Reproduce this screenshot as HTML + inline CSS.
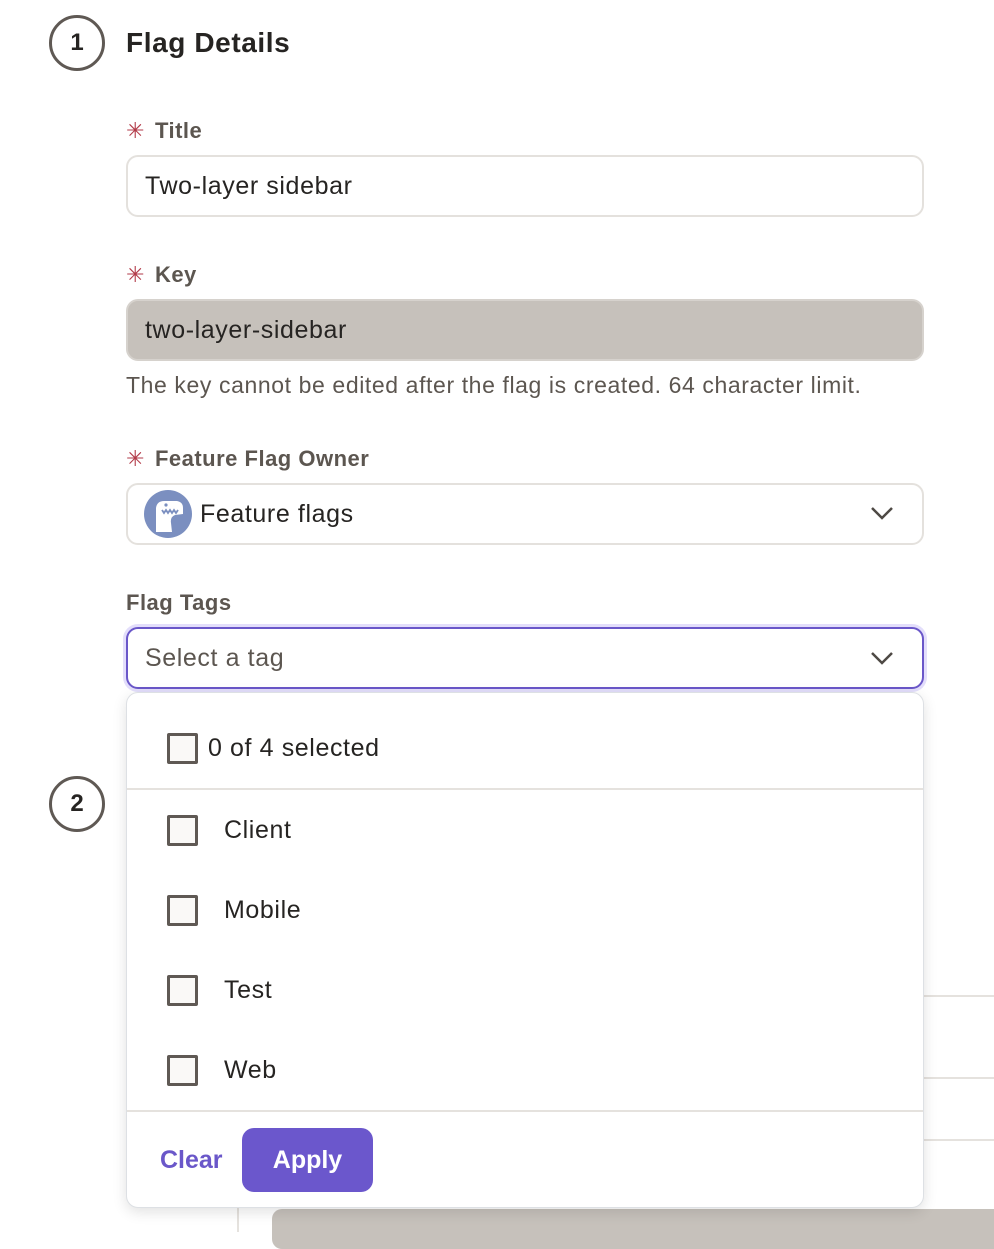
<!DOCTYPE html>
<html><head><meta charset="utf-8"><style>
*{box-sizing:border-box;margin:0;padding:0}
body{width:994px;height:1232px;background:#fff;position:relative;overflow:hidden;font-family:"Liberation Sans",sans-serif;color:#262422;letter-spacing:0.6px}
.a{position:absolute}
.circ{width:56px;height:56px;border:3px solid #5f5954;border-radius:50%;font-weight:bold;font-size:24px;display:flex;align-items:center;justify-content:center;color:#262422;letter-spacing:0}
.lbl{font-size:22px;font-weight:bold;color:#5c5650;left:126px;letter-spacing:0.5px}
.lbl .s{color:#b23a48;font-weight:normal;margin-right:10px;font-size:22px}
.inp{left:126px;width:798px;height:62px;border:2px solid #e4e1dd;border-radius:12px;font-size:25px;padding-left:17px;display:flex;align-items:center;background:#fff}
.cb{width:31px;height:31px;border:3px solid #5f5954;border-radius:2px;background:#faf9f7;left:167px}
.it{font-size:25px;left:224px}
.line{background:#e5e2de;height:2px}
</style></head><body>
<div class="a line" style="left:924px;top:995px;width:70px"></div>
<div class="a line" style="left:924px;top:1077px;width:70px"></div>
<div class="a line" style="left:924px;top:1139px;width:70px"></div>
<div class="a" style="left:237px;top:1200px;width:2px;height:32px;background:#e5e2de"></div>
<div class="a" style="left:272px;top:1209px;width:740px;height:40px;background:#c6c1bb;border-radius:10px"></div>

<div class="a circ" style="left:49px;top:15px">1</div>
<div class="a" style="left:126px;top:27px;font-size:28px;font-weight:bold;letter-spacing:0.6px">Flag Details</div>

<div class="a lbl" style="top:118px"><span class="s">✳</span>Title</div>
<div class="a inp" style="top:155px">Two-layer sidebar</div>

<div class="a lbl" style="top:262px"><span class="s">✳</span>Key</div>
<div class="a inp" style="top:299px;background:#c6c1bb;border-color:#d6d2cd">two-layer-sidebar</div>
<div class="a" style="left:126px;top:372px;font-size:23px;color:#5c5650;letter-spacing:0.6px">The key cannot be edited after the flag is created. 64 character limit.</div>

<div class="a lbl" style="top:446px"><span class="s">✳</span>Feature Flag Owner</div>
<div class="a inp" style="top:483px;padding-left:16px">
<div style="width:48px;height:48px;border-radius:50%;background:#7b8fc0;margin-right:8px;position:relative;overflow:hidden">
<svg width="48" height="48" viewBox="0 0 48 48"><path d="M12 42 L12 18 Q13 11 20 11 L33 11 Q39 12 39 18 L39 24 L31 25 Q26 27 27 33 L28 42 Z" fill="#fff"/><path d="M18 20 L20 23 L22 20 L24 23 L26 20 L28 23 L30 20 L32 23 L34 20" stroke="#7b8fc0" stroke-width="1.8" fill="none"/><circle cx="22" cy="15" r="1.6" fill="#7b8fc0"/></svg>
</div>Feature flags
<svg class="a" style="right:28px;top:20px" width="24" height="16" viewBox="0 0 24 16"><path d="M2 3 L12 13 L22 3" stroke="#4e4944" stroke-width="2.5" fill="none"/></svg>
</div>

<div class="a lbl" style="top:590px">Flag Tags</div>
<div class="a inp" style="top:627px;border-color:#6a57c9;box-shadow:0 0 0 3px #e3defb;color:#5c5650">Select a tag
<svg class="a" style="right:28px;top:21px" width="24" height="16" viewBox="0 0 24 16"><path d="M2 3 L12 13 L22 3" stroke="#4e4944" stroke-width="2.5" fill="none"/></svg>
</div>

<div class="a circ" style="left:49px;top:776px">2</div>

<div class="a" style="left:126px;top:692px;width:798px;height:516px;background:#fff;border:1px solid #dde0e4;border-radius:12px;box-shadow:0 4px 14px rgba(0,0,0,0.12)"></div>
<div class="a cb" style="top:733px"></div>
<div class="a" style="left:208px;top:734px;font-size:25px">0 of 4 selected</div>
<div class="a line" style="left:127px;top:788px;width:796px"></div>
<div class="a cb" style="top:815px"></div><div class="a it" style="top:816px">Client</div>
<div class="a cb" style="top:895px"></div><div class="a it" style="top:896px">Mobile</div>
<div class="a cb" style="top:975px"></div><div class="a it" style="top:976px">Test</div>
<div class="a cb" style="top:1055px"></div><div class="a it" style="top:1056px">Web</div>
<div class="a line" style="left:127px;top:1110px;width:796px"></div>
<div class="a" style="left:160px;top:1146px;font-size:25px;font-weight:bold;color:#6a57c9;letter-spacing:0">Clear</div>
<div class="a" style="left:242px;top:1128px;width:131px;height:64px;background:#6b57cc;border-radius:12px;color:#fff;font-size:25px;font-weight:bold;display:flex;align-items:center;justify-content:center;letter-spacing:0">Apply</div>
</body></html>
